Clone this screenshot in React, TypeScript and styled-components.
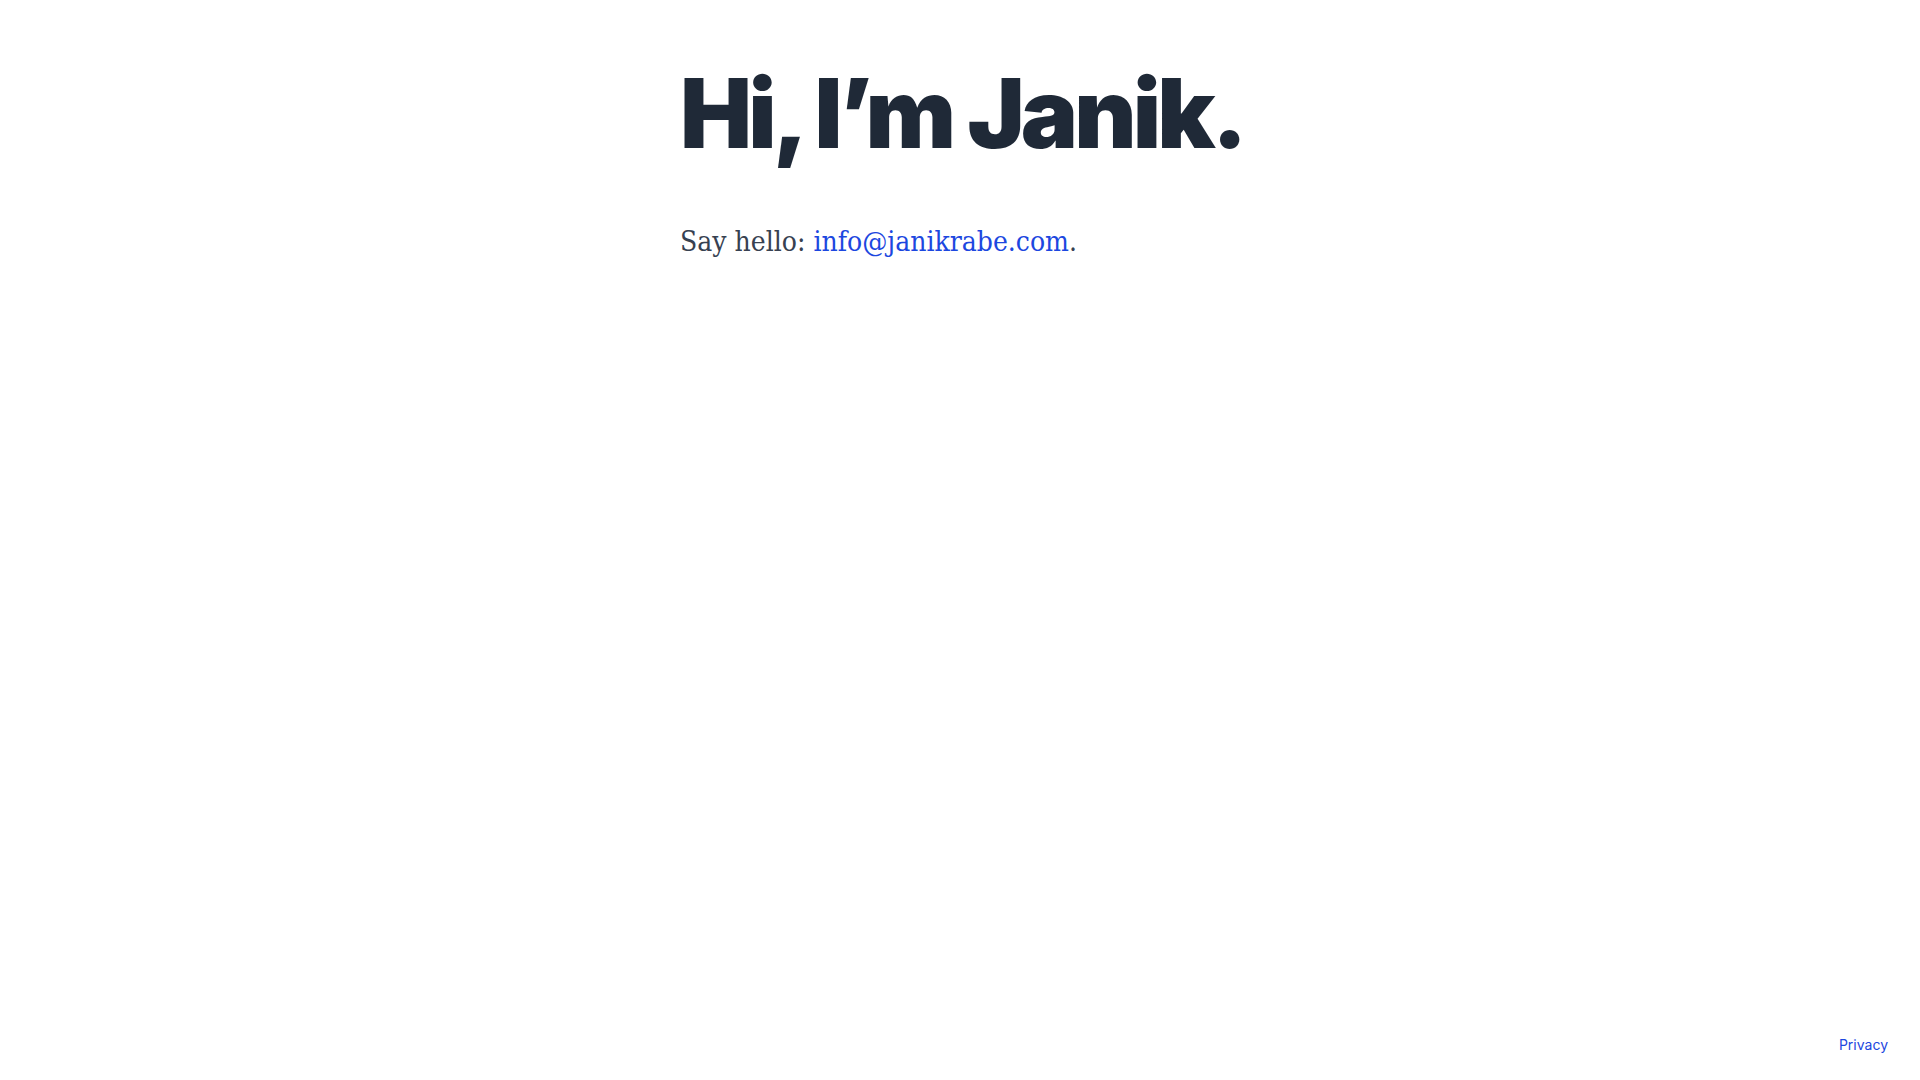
import styled, { createGlobalStyle } from 'styled-components'

const GlobalStyle = createGlobalStyle`
  html, body {
    margin: 0;
    padding: 0;
    background: #ffffff;
  }
  body {
    font-family: 'Inter', 'Liberation Sans', sans-serif;
    -webkit-font-smoothing: antialiased;
  }
`

const Page = styled.div`
  min-height: 100vh;
  display: flex;
  flex-direction: column;
  box-sizing: border-box;
`

const Main = styled.main`
  flex: 1;
  width: 560px;
  margin: 0 auto;
  padding-top: 65px;
`

const Title = styled.h1`
  margin: 0;
  font-family: 'Inter', sans-serif;
  font-weight: 900;
  font-size: 96px;
  line-height: 1;
  letter-spacing: -0.04em;
  white-space: nowrap;
  color: #1f2937;
`

const Hello = styled.p`
  margin: 61px 0 0;
  font-family: 'DejaVu Serif Condensed', 'DejaVu Serif', serif;
  font-stretch: condensed;
  font-size: 28px;
  line-height: 1.4;
  white-space: nowrap;
  color: #374151;
`

const Link = styled.a`
  color: #1c47e0;
  text-decoration: none;
`

const Footer = styled.footer`
  display: flex;
  justify-content: flex-end;
  padding: 0 32px 27px;
`

const SmallLink = styled.a`
  font-family: 'Inter', sans-serif;
  font-size: 14px;
  color: #1c47e0;
  text-decoration: none;
`

export default function App() {
  return (
    <Page>
      <GlobalStyle />
      <Main>
        <Title>Hi, I’m Janik.</Title>
        <Hello>
          Say hello: <Link href="mailto:info@janikrabe.com">info@janikrabe.com</Link>.
        </Hello>
      </Main>
      <Footer>
        <SmallLink href="#">Privacy</SmallLink>
      </Footer>
    </Page>
  )
}
